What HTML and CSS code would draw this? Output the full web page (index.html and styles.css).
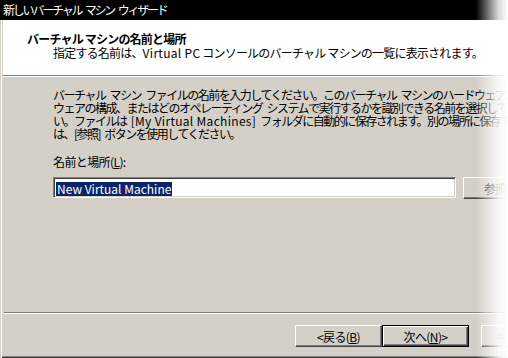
FILE: index.html
```html
<!DOCTYPE html>
<html lang="ja">
<head>
    <meta charset="UTF-8">
    <title>新しいバーチャル マシン ウィザード</title>
    <link rel="stylesheet" href="styles.css">
</head>
<body>
    <div class="ventana">
        <div class="titulo">新しいバーチャル マシン ウィザード</div>

        <div class="cabecera">
            <div class="cab-titulo">バーチャル マシンの名前と場所</div>
            <div class="cab-sub">指定する名前は、<span class="ascii">Virtual PC</span> コンソールのバーチャル マシンの一覧に表示されます。</div>
        </div>
        <div class="separador"></div>

        <div class="contenido">
            <p class="texto">
                バーチャル マシン ファイルの名前を入力してください。このバーチャル マシンのハードウェアまたはソフト<br>
                ウェアの構成、またはどのオペレーティング システムで実行するかを識別できる名前を選択してくださ<br>
                い。ファイルは <span class="ascii">[My Virtual Machines]</span> フォルダに自動的に保存されます。別の場所に保存する場合<br>
                は、[参照] ボタンを使用してください。
            </p>

            <div class="etiqueta">名前と場所(<u>L</u>):</div>
            <div class="fila">
                <div class="caja"><span class="seleccion">New Virtual Machine</span></div>
                <div class="boton">参照(<u>R</u>)...</div>
            </div>
        </div>
        <div class="separador abajo"></div>

        <div class="pie">
            <div class="boton">&lt;戻る(<u>B</u>)</div>
            <div class="boton defecto">次へ(<u>N</u>)&gt;</div>
            <div class="boton desactivado">キャンセル</div>
        </div>
    </div>

    <!-- desvanecido del borde derecho -->
    <div class="fundido"></div>
</body>
</html>
```

FILE: styles.css
```css
body {
    margin: 0;
    width: 508px;
    height: 358px;
    overflow: hidden;
    background-color: #ffffff;
    font-family: "Noto Sans CJK JP", "Liberation Sans", sans-serif;
    font-size: 12px;
    color: #000;
    position: relative;
}

.ventana {
    width: 600px;
    height: 358px;
    box-sizing: border-box;
    background-color: #d4d0c8;
    border-left: 1px solid #d4d0c8;
    box-shadow: inset 1px 0 0 #ffffff, inset 0 -1px 0 #404040, inset 0 -2px 0 #808080;
    padding-left: 2px;
    display: flex;
    flex-direction: column;
}

.titulo {
    height: 20px;
    margin-left: -3px;
    padding-left: 3px;
    background-color: #000;
    color: #fff;
    line-height: 20px;
    letter-spacing: -2.2px;
    word-spacing: 3px;
}

.cabecera {
    height: 55px;
    background-color: #fff;
    box-sizing: border-box;
    padding-top: 12px;
}

.cab-titulo {
    font-weight: bold;
    padding-left: 24px;
    line-height: 14px;
    letter-spacing: -0.8px;
}

.cab-sub {
    padding-left: 50px;
    line-height: 14px;
    letter-spacing: -0.8px;
}

.ascii {
    letter-spacing: 0.3px;
    word-spacing: normal;
}

.separador {
    height: 2px;
    border-top: 1px solid #808080;
    border-bottom: 1px solid #fff;
    box-sizing: border-box;
}

.separador.abajo {
    margin-left: 1px;
}

.contenido {
    height: 235px;
    box-sizing: border-box;
    padding: 11px 0 0 50px;
}

.texto {
    margin: 0;
    white-space: nowrap;
    line-height: 13px;
    letter-spacing: -1.5px;
    word-spacing: 3px;
}

.etiqueta {
    margin-top: 15px;
    line-height: 13px;
    letter-spacing: -0.6px;
}

.fila {
    display: flex;
    gap: 7px;
    margin-top: 9px;
}

.caja {
    width: 403px;
    height: 21px;
    box-sizing: border-box;
    background-color: #fff;
    border-top: 1px solid #808080;
    border-left: 1px solid #808080;
    border-bottom: 1px solid #fff;
    border-right: 1px solid #fff;
    box-shadow: inset 1px 1px 0 #404040, inset -1px -1px 0 #d4d0c8;
    padding: 2px 0 0 2px;
}

.seleccion {
    display: inline-block;
    background-color: #0a246a;
    color: #fff;
    line-height: 14px;
    padding: 0 1px;
}

.boton {
    width: 87px;
    height: 22px;
    box-sizing: border-box;
    background-color: #d4d0c8;
    border-top: 1px solid #fff;
    border-left: 1px solid #fff;
    border-bottom: 1px solid #404040;
    border-right: 1px solid #404040;
    box-shadow: inset -1px -1px 0 #808080;
    display: flex;
    align-items: center;
    justify-content: center;
    letter-spacing: -0.6px;
}

.boton.defecto {
    border: 1px solid #000;
    box-shadow: inset 1px 1px 0 #fff, inset -1px -1px 0 #404040, inset -2px -2px 0 #808080;
}

.boton.desactivado {
    color: #808080;
    margin-left: 12px;
}

.pie {
    display: flex;
    padding: 11px 0 0 292px;
}

.fundido {
    position: absolute;
    top: 0;
    right: 0;
    width: 32px;
    height: 358px;
    background: linear-gradient(to right, rgba(255, 255, 255, 0), rgba(255, 255, 255, 0.85) 70%, #fff);
}
```
